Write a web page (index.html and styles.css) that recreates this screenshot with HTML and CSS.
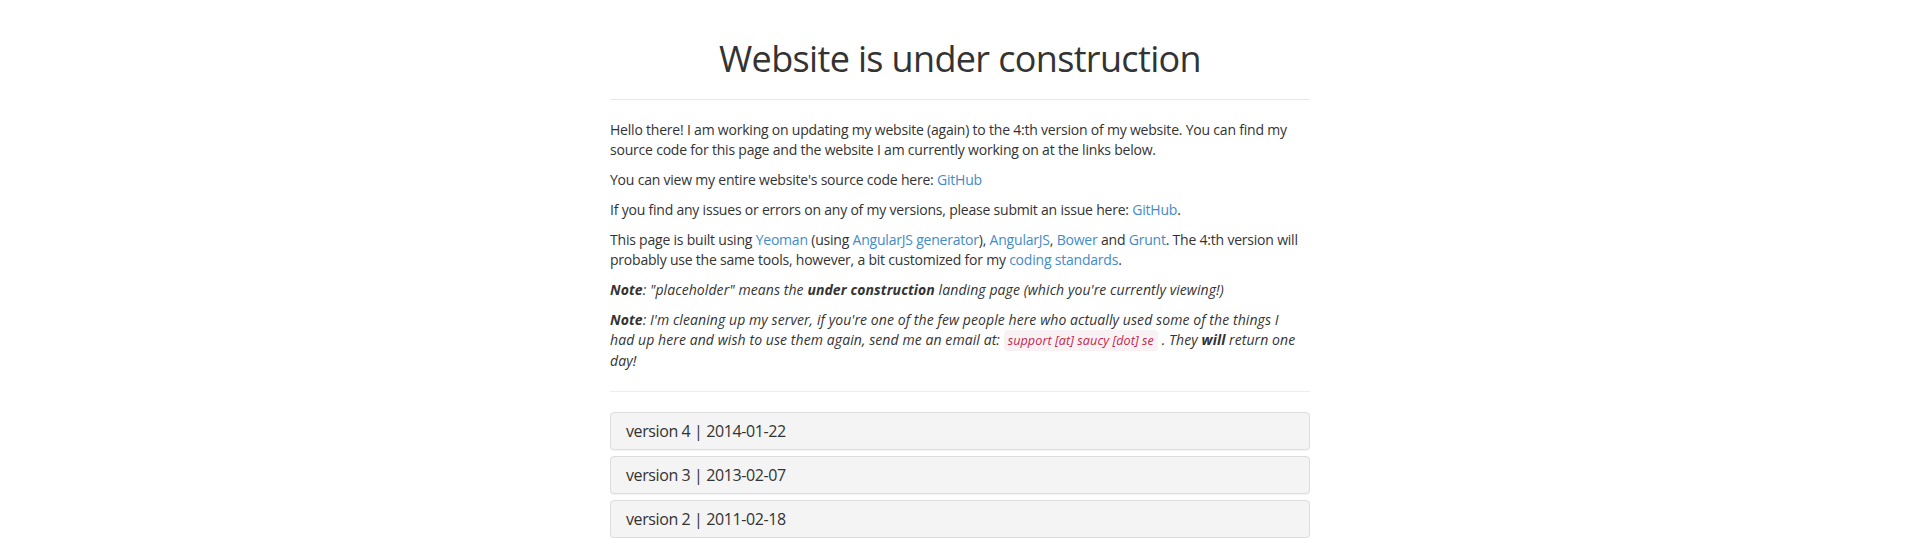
FILE: index.html
```html
<!DOCTYPE html>
<html lang="en">
<head>
<meta charset="utf-8">
<title>Website is under construction</title>
<link rel="stylesheet" href="styles.css">
</head>
<body>
<div class="container">
  <div class="header">
    <h1 class="title">Website is under construction</h1>
  </div>
  <div class="content">
    <p>Hello there! I am working on updating my website (again) to the 4:th version of my website. You can find my source code for this page and the website I am currently working on at the links below.</p>
    <p>You can view my entire website's source code here: <a href="#">GitHub</a></p>
    <p>If you find any issues or errors on any of my versions, please submit an issue here: <a href="#">GitHub</a>.</p>
    <p>This page is built using <a href="#">Yeoman</a> (using <a href="#">AngularJS generator</a>), <a href="#">AngularJS</a>, <a href="#">Bower</a> and <a href="#">Grunt</a>. The 4:th version will probably use the same tools, however, a bit customized for my <a href="#">coding standards</a>.</p>
    <p><em><strong>Note</strong>: "placeholder" means the <strong>under construction</strong> landing page (which you're currently viewing!)</em></p>
    <p><em><strong>Note</strong>: I'm cleaning up my server, if you're one of the few people here who actually used some of the things I<br>had up here and wish to use them again, send me an email at: <code class="email">support [at] saucy [dot] se</code> . They <strong>will</strong> return one day!</em></p>
  </div>
  <hr class="divider">
  <div class="panel-group">
    <div class="panel"><div class="panel-heading">version 4 | 2014-01-22</div></div>
    <div class="panel"><div class="panel-heading">version 3 | 2013-02-07</div></div>
    <div class="panel"><div class="panel-heading">version 2 | 2011-02-18</div></div>
  </div>
</div>
</body>
</html>
```
FILE: styles.css
```css
html, body {
  margin: 0;
  padding: 0;
  background: #fff;
}
body {
  font-family: "Open Sans", "Noto Sans", sans-serif;
  font-size: 14px;
  line-height: 20px;
  color: #333;
  letter-spacing: -0.015em;
}
.container {
  max-width: 700px;
  margin: 0 auto;
  padding: 0 15px;
}
.header {
  text-align: center;
  padding-bottom: 20px;
  border-bottom: 1px solid #e9e9e9;
}
.title {
  margin: 39px 0 0;
  font-size: 36px;
  line-height: 40px;
  font-weight: 400;
  color: #333;
  letter-spacing: -0.018em;
}
.content {
  padding-top: 20px;
}
.content p {
  margin: 0 0 10px;
}
.content em {
  letter-spacing: 0.006em;
}
.content a {
  color: #428bca;
  text-decoration: none;
}
.content strong {
  font-weight: 700;
}
.email {
  font-family: inherit;
  font-size: 90%;
  padding: 2px 4px;
  color: #c7254e;
  background: #f9f2f4;
  border-radius: 4px;
}
.divider {
  margin: 20px 0;
  border: 0;
  border-top: 1px solid #eee;
  height: 0;
}
.panel-group {
  display: flex;
  flex-direction: column;
  gap: 6px;
}
.panel {
  border: 1px solid #ddd;
  border-radius: 4px;
  background: #f4f4f4;
  box-shadow: 0 1px 1px rgba(0,0,0,0.05);
}
.panel-heading {
  padding: 10px 15px;
  font-size: 16px;
  line-height: 16px;
  color: #333;
  letter-spacing: -0.025em;
}
```
